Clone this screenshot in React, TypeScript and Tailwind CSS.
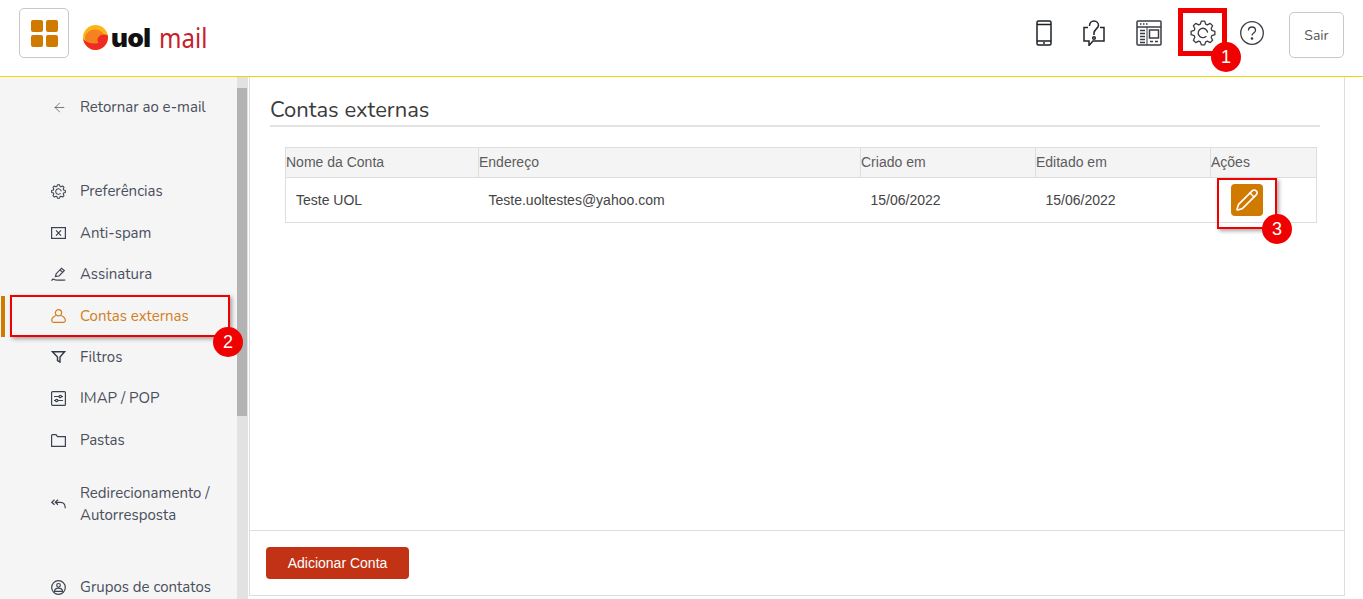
import { ArrowLeft, Pencil } from "lucide-react";
import type { ReactNode } from "react";

const ui = "font-['Nunito','Lato','Noto_Sans',sans-serif]";

function Marker({ n, className }: { n: number; className: string }) {
  return (
    <span className={`absolute z-20 flex h-[30px] w-[30px] items-center justify-center rounded-full bg-[#f00000] font-['Liberation_Sans',sans-serif] text-[18px] text-white ${className}`}>
      {n}
    </span>
  );
}

function NavItem({ icon, children, className = "", active = false }: { icon: ReactNode; children: ReactNode; className?: string; active?: boolean }) {
  return (
    <div className={`flex items-center pl-[51px] text-[15px] leading-[22px] ${active ? "text-[#d07f1e]" : "text-[#4a4f5c]"} ${className}`}>
      <span className="flex w-[29px] shrink-0">{icon}</span>
      <span>{children}</span>
    </div>
  );
}

// engrenagem de 8 dentes com contorno arredondado
function gearPath(cx: number, cy: number, rOut: number, rIn: number) {
  const pts: string[] = [];
  for (let i = 0; i < 8; i++) {
    const a = (i * Math.PI) / 4;
    const offs: [number, number][] = [[-0.3, rIn], [-0.14, rOut], [0.14, rOut], [0.3, rIn]];
    for (const [d, r] of offs) {
      pts.push(`${(cx + r * Math.cos(a + d)).toFixed(2)} ${(cy + r * Math.sin(a + d)).toFixed(2)}`);
    }
  }
  return `M${pts.join("L")}Z`;
}

function GearIcon({ size, color, stroke }: { size: number; color: string; stroke: number }) {
  return (
    <svg width={size} height={size} viewBox="0 0 26 26" fill="none" stroke={color} strokeWidth={stroke} strokeLinejoin="round" strokeLinecap="round">
      <path d={gearPath(13, 13, 12, 9.2)} />
      <path d="M17.500 12a4.700 4.700 0 1 0-1.500 4.500" />
    </svg>
  );
}

function PhoneIcon() {
  return (
    <svg width="16" height="26" viewBox="0 0 16 26" fill="none" stroke="#1d2026" strokeWidth="1.500">
      <rect x="1" y="1" width="14" height="24" rx="1.500" />
      <path d="M1 4.500h14M1 21h14" />
      <path d="M7 23h2" />
    </svg>
  );
}

function QuestionBubble() {
  return (
    <svg width="22" height="26" viewBox="0 0 22 26" fill="none" stroke="#23262c" strokeWidth="1.500">
      <path d="M5 7.500H1V21h5v4.500l4-4.500h11V7.500h-4" />
      <path d="M6.500 6C6.500 3 8.500 1 11 1s4.500 2 4.500 4.500c0 2.500-4.500 4-4.500 7.500v2" />
      <circle cx="11" cy="18" r="1.300" />
    </svg>
  );
}

function LayoutIcon() {
  return (
    <svg width="26" height="26" viewBox="0 0 26 26" fill="none" stroke="#3a3d44" strokeWidth="1.500">
      <rect x="1" y="1" width="24" height="24" rx="1" />
      <path d="M1 7h24" />
      <path d="M4 4h1.500M7 4h1.500M10 4h1.500" />
      <path d="M4 10.500h5M4 13.500h5M4 16.500h5M4 19.500h5M4 22.500h5" strokeWidth="1.300" />
      <path d="M11 7v18" strokeWidth="1" />
      <rect x="13.500" y="10" width="9" height="8" />
      <path d="M14 21.500h3M19 21.500h3" />
    </svg>
  );
}

function HelpIcon() {
  return (
    <svg width="24" height="24" viewBox="0 0 24 24" fill="none" stroke="#3a3d44" strokeWidth="1.300">
      <circle cx="12" cy="12" r="11.300" />
      <path d="M8.500 9.500C8.500 7 10 6 12 6s3.500 1.200 3.500 3.200c0 2.800-3.500 2.800-3.500 5.300" />
      <circle cx="12" cy="17.500" r="0.700" fill="#3a3d44" />
    </svg>
  );
}

const s = { fill: "none", stroke: "#3d4250", strokeWidth: 1.200 };

function MailXIcon() {
  return (
    <svg width="15" height="12" viewBox="0 0 15 12" {...s}>
      <rect x="0.600" y="0.600" width="13.800" height="10.800" />
      <path d="M5 3.300l5 5.400M10 3.300l-5 5.400" />
    </svg>
  );
}

function SignIcon() {
  return (
    <svg width="15" height="15" viewBox="0 0 15 15" {...s}>
      <path d="M4.500 9.500l.7-2.800L10.500 1.200l2.800 2.400-5.300 5.400z" />
      <path d="M9 3l2.800 2.400" />
      <path d="M.6 13.800c1-2.600 2.400-1.600 3.400-1s9 .4 10.400.2" />
    </svg>
  );
}

function PersonIcon() {
  return (
    <svg width="15" height="14" viewBox="0 0 15 14" fill="none" stroke="#d07f1e" strokeWidth="1.200">
      <circle cx="7.500" cy="3.800" r="3.100" />
      <path d="M5 6.500C2.500 7.500.7 9.500.7 11.500c0 1.200.8 1.800 1.800 1.800h10c1 0 1.800-.6 1.800-1.800 0-2-1.800-4-4.300-5" />
    </svg>
  );
}

function FunnelIcon() {
  return (
    <svg width="15" height="12" viewBox="0 0 15 12" fill="none" stroke="#333845" strokeWidth="1.400">
      <path d="M1.500 .8h12L9 6v5L6.500 9.500V6z" />
    </svg>
  );
}

function ImapIcon() {
  return (
    <svg width="15" height="15" viewBox="0 0 15 15" {...s}>
      <rect x="0.600" y="0.600" width="13.800" height="13.800" rx="1" />
      <path d="M3 5.500h5M10.500 5.500h1.500M3 9.500h1.500M7 9.500h5" />
      <circle cx="9.300" cy="5.500" r="1.200" />
      <circle cx="5.700" cy="9.500" r="1.200" />
    </svg>
  );
}

function FolderIcon() {
  return (
    <svg width="15" height="13" viewBox="0 0 15 13" {...s}>
      <path d="M.6 12.400V1.600c0-.6.4-1 1-1h3.400l1.500 2h7.900v9.800z" />
    </svg>
  );
}

function ReplyAllIcon() {
  return (
    <svg width="15" height="10" viewBox="0 0 15 10" {...s}>
      <path d="M3.500 .8L.8 3.300l2.700 2.500M7 .8L4.300 3.300 7 5.800" />
      <path d="M4.500 3.300h5c3 0 4.800 2 4.800 6" />
    </svg>
  );
}

function GroupIcon() {
  return (
    <svg width="15" height="15" viewBox="0 0 15 15" {...s}>
      <circle cx="7.500" cy="7.500" r="6.800" />
      <circle cx="7.500" cy="5.300" r="1.800" />
      <path d="M3.500 11.300c0-2 1.500-3.200 4-3.200s4 1.200 4 3.200z" />
    </svg>
  );
}

function UolSun() {
  return (
    <svg width="25" height="25" viewBox="0 0 25 25">
      <circle cx="12.500" cy="12.500" r="12.500" fill="#fbb616" />
      <ellipse cx="12" cy="13" rx="10" ry="8.500" fill="#f58220" />
      <path d="M.2 14c1 6 6 11 12.300 11S25 19.500 25 12.500c0-1-.1-1.500-.3-2.300-3.500-1.700-7.700-.4-9.500 2.300-1.200 2-.9 4 .3 5.500C9.500 19.500 4 18 .2 14z" fill="#ee2a24" />
    </svg>
  );
}

export default function App() {
  return (
    <div className={`relative flex h-[599px] w-[1363px] flex-col overflow-hidden bg-white ${ui}`}>
      {/* topo */}
      <header className="flex h-[77px] shrink-0 items-start border-b border-[#f2d600] pl-[19px] pr-[19px] pt-[8px]">
        <button className="flex h-[50px] w-[50px] items-center justify-center rounded-[5px] border border-[#c8c8c8]">
          <span className="grid grid-cols-2 gap-[3px]">
            <i className="h-[12px] w-[12px] rounded-[2px] bg-[#d07a00]" />
            <i className="h-[12px] w-[12px] rounded-[2px] bg-[#d07a00]" />
            <i className="h-[12px] w-[12px] rounded-[2px] bg-[#d07a00]" />
            <i className="h-[12px] w-[12px] rounded-[2px] bg-[#d07a00]" />
          </span>
        </button>
        <div className="ml-[14px] mt-[17px] flex h-[25px] items-center">
          <UolSun />
          <span className="ml-[3px] font-['Inter',sans-serif] text-[26px] font-black leading-none tracking-[-0.5px] text-[#111]">uol</span>
          <span className="ml-[9px] inline-block origin-left scale-x-[0.89] font-['Noto_Sans',sans-serif] text-[27px] leading-none text-[#c8202a]">mail</span>
        </div>
        <div className="ml-auto flex items-start">
          <span className="mt-[12px] flex"><PhoneIcon /></span>
          <span className="ml-[31px] mt-[12px] flex"><QuestionBubble /></span>
          <span className="ml-[31px] mt-[12px] flex"><LayoutIcon /></span>
          <span className="ml-[28px] mt-[12px] flex"><GearIcon size={26} color="#3a3d44" stroke={1.300} /></span>
          <span className="ml-[24px] mt-[13px] flex"><HelpIcon /></span>
          <button className="ml-[25px] mt-[4px] h-[46px] w-[55px] rounded-[5px] border border-[#c8c8c8] text-[14px] text-[#555]">Sair</button>
        </div>
      </header>

      <div className="flex min-h-0 flex-1">
        {/* menu lateral */}
        <aside className="flex w-[237px] shrink-0 flex-col overflow-hidden bg-[#f5f5f5] pt-[19px]">
          <NavItem icon={<ArrowLeft className="ml-px h-[15px] w-[15px] text-[#3d4250]" strokeWidth={1.100} />}>Retornar ao e-mail</NavItem>
          <NavItem className="mt-[62px]" icon={<GearIcon size={15} color="#3d4250" stroke={1.800} />}>Preferências</NavItem>
          <NavItem className="mt-[20px]" icon={<MailXIcon />}>Anti-spam</NavItem>
          <NavItem className="mt-[19px]" icon={<SignIcon />}>Assinatura</NavItem>
          <NavItem active className="mt-[20px]" icon={<PersonIcon />}>Contas externas</NavItem>
          <NavItem className="mt-[19px]" icon={<FunnelIcon />}>Filtros</NavItem>
          <NavItem className="mt-[19px]" icon={<ImapIcon />}>IMAP / POP</NavItem>
          <NavItem className="mt-[20px]" icon={<FolderIcon />}>Pastas</NavItem>
          <NavItem className="mt-[31px]" icon={<ReplyAllIcon />}>Redirecionamento /<br />Autorresposta</NavItem>
          <NavItem className="mt-[50px]" icon={<GroupIcon />}>Grupos de contatos</NavItem>
        </aside>

        {/* barra de rolagem */}
        <div className="w-[11px] shrink-0 bg-[#e2e2e2] pt-[11px]">
          <div className="h-[328px] w-[10px] bg-[#b3b3b3]" />
        </div>

        {/* conteudo */}
        <main className="mb-[3px] ml-px mr-[18px] flex min-w-0 flex-1 flex-col border-x border-b border-[#dedede]">
          <div className="flex-1 pl-[20px] pr-[24px] pt-[19px]">
            <h1 className="border-b-2 border-[#e2e2e2] pb-px text-[22px] leading-[28px] text-[#3b3b3b]">Contas externas</h1>
            <table className="ml-[15px] mt-[20px] w-[1032px] table-fixed border-collapse font-['Liberation_Sans',sans-serif] text-[14px]">
              <colgroup>
                <col className="w-[193px]" />
                <col className="w-[382px]" />
                <col className="w-[175px]" />
                <col className="w-[175px]" />
                <col />
              </colgroup>
              <thead>
                <tr className="h-[30px] bg-[#f4f4f4]">
                  <th className="border border-[#dedede] text-left font-normal text-[#5c5c5c]">Nome da Conta</th>
                  <th className="border border-[#dedede] text-left font-normal text-[#5c5c5c]">Endereço</th>
                  <th className="border border-[#dedede] text-left font-normal text-[#5c5c5c]">Criado em</th>
                  <th className="border border-[#dedede] text-left font-normal text-[#5c5c5c]">Editado em</th>
                  <th className="border border-[#dedede] text-left font-normal text-[#5c5c5c]">Ações</th>
                </tr>
              </thead>
              <tbody className="text-[#444]">
                <tr className="h-[45px] border border-[#dedede]">
                  <td className="pl-[10px]">Teste UOL</td>
                  <td className="pl-[10px]">Teste.uoltestes@yahoo.com</td>
                  <td className="pl-[10px]">15/06/2022</td>
                  <td className="pl-[10px]">15/06/2022</td>
                  <td className="pl-[20px]">
                    <span className="flex h-[32px] w-[32px] items-center justify-center rounded-[4px] bg-[#d07a00]">
                      <Pencil className="h-[24px] w-[24px] text-white" strokeWidth={1.600} />
                    </span>
                  </td>
                </tr>
              </tbody>
            </table>
          </div>
          <div className="flex h-[65px] shrink-0 items-start border-t border-[#dedede] pl-[16px] pt-[16px]">
            <button className="h-[32px] w-[143px] rounded-[4px] bg-[#c23215] font-['Liberation_Sans',sans-serif] text-[14px] text-white">Adicionar Conta</button>
          </div>
        </main>
      </div>

      {/* marcacoes do tutorial */}
      <div className="absolute left-[1178px] top-[8px] z-10 h-[48px] w-[49px] border-[5px] border-[#f00000]" />
      <Marker n={1} className="left-[1211px] top-[42px]" />
      <div className="absolute left-[10px] top-[295px] z-10 h-[42px] w-[220px] border-2 border-[#f00000] shadow-[2px_2px_4px_rgba(0,0,0,0.35)]" />
      <div className="absolute left-[1px] top-[296px] h-[41px] w-[4px] bg-[#d07a00]" />
      <Marker n={2} className="left-[213px] top-[327px]" />
      <div className="absolute left-[1217px] top-[178px] z-10 h-[51px] w-[60px] border-2 border-[#f00000] shadow-[2px_2px_4px_rgba(0,0,0,0.35)]" />
      <Marker n={3} className="left-[1262px] top-[214px]" />
    </div>
  );
}
